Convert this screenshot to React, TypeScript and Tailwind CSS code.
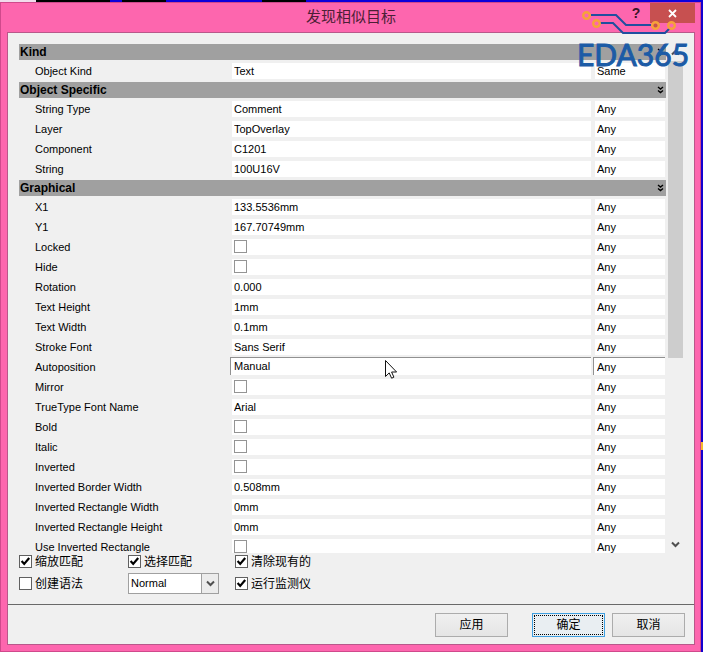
import { useState } from "react";
import clsx from "clsx";

type Field = { name: string; value: string | boolean; match?: string; active?: boolean };
type Group = { title: string; fields: Field[] };

const GROUPS: Group[] = [
  { title: "Kind", fields: [{ name: "Object Kind", value: "Text", match: "Same" }] },
  {
    title: "Object Specific",
    fields: [
      { name: "String Type", value: "Comment" },
      { name: "Layer", value: "TopOverlay" },
      { name: "Component", value: "C1201" },
      { name: "String", value: "100U16V" },
    ],
  },
  {
    title: "Graphical",
    fields: [
      { name: "X1", value: "133.5536mm" },
      { name: "Y1", value: "167.70749mm" },
      { name: "Locked", value: false },
      { name: "Hide", value: false },
      { name: "Rotation", value: "0.000" },
      { name: "Text Height", value: "1mm" },
      { name: "Text Width", value: "0.1mm" },
      { name: "Stroke Font", value: "Sans Serif" },
      { name: "Autoposition", value: "Manual", active: true },
      { name: "Mirror", value: false },
      { name: "TrueType Font Name", value: "Arial" },
      { name: "Bold", value: false },
      { name: "Italic", value: false },
      { name: "Inverted", value: false },
      { name: "Inverted Border Width", value: "0.508mm" },
      { name: "Inverted Rectangle Width", value: "0mm" },
      { name: "Inverted Rectangle Height", value: "0mm" },
      { name: "Use Inverted Rectangle", value: false },
    ],
  },
];

function Chevrons() {
  return (
    <svg width="7" height="8" viewBox="0 0 7 8" fill="none" stroke="#000" strokeWidth="1.4" aria-hidden="true">
      <path d="M1 1 3.5 3 6 1M1 4.5l2.5 2 2.5-2" />
    </svg>
  );
}

function Arrow({ up = false }: { up?: boolean }) {
  return (
    <svg width="9" height="7" viewBox="0 0 9 7" fill="none" stroke="#505050" strokeWidth="2" aria-hidden="true">
      <path d={up ? "M1 5.5 4.5 2 8 5.5" : "M1 1.5 4.5 5 8 1.5"} />
    </svg>
  );
}

function FieldRow({ name, value, match = "Any", active }: Field) {
  const id = name.replace(/ /g, "-");
  const cell = clsx("flex items-center bg-white", active ? "-mt-0.5 -ml-0.5 border-t border-l border-[#919191] pl-[3px]" : "pl-0.5");
  return (
    <div className="grid h-5 grid-cols-[213px_1fr_70px] py-0.5 pr-px">
      <label htmlFor={id} className="pl-4 leading-4">{name}</label>
      <div className={clsx(cell, "mr-1")}>
        {typeof value === "boolean" ? (
          <input id={id} type="checkbox" defaultChecked={value} className="mb-px size-[13px] appearance-none border border-[#949494] bg-white" />
        ) : (
          <input id={id} type="text" defaultValue={value} className="h-4 w-full bg-transparent outline-none" />
        )}
      </div>
      <div className={cell}>
        <select aria-label={`${name} match`} defaultValue={match} className="h-4 w-full appearance-none bg-transparent leading-4 outline-none">
          <option>Any</option>
          <option>Same</option>
          <option>Different</option>
        </select>
      </div>
    </div>
  );
}

function Option({ label, on }: { label: string; on: boolean }) {
  const [checked, setChecked] = useState(on);
  return (
    <label className="flex items-center gap-[3px] text-[12px] leading-4">
      <span className="relative flex size-[13px]">
        <input type="checkbox" checked={checked} onChange={(e) => setChecked(e.target.checked)} className="size-[13px] appearance-none border border-[#606060] bg-white" />
        {checked && (
          <svg className="pointer-events-none absolute inset-0" width="13" height="13" viewBox="0 0 13 13" fill="none" stroke="#000" strokeWidth="2.2" aria-hidden="true">
            <path d="M2.6 6 5.2 8.9 10.2 3" />
          </svg>
        )}
      </span>
      {label}
    </label>
  );
}

function Logo() {
  return (
    <div className="pointer-events-none absolute top-[10px] right-[13px] w-[113px] text-[#1c5ba6]">
      <svg className="ml-[5px]" width="100" height="28" viewBox="0 0 100 28" fill="none" aria-hidden="true">
        <g stroke="#1f4f9f" strokeWidth="2">
          <path d="M9 5h25l10 10h25M18 13h13l10 10h42l5-5" />
        </g>
        <g stroke="#f6a23a" strokeWidth="2.4">
          <circle cx="4.5" cy="5.5" r="3.3" fill="#fd66ae" />
          <circle cx="14.5" cy="13.5" r="3.3" fill="#fd66ae" />
          <circle cx="73.5" cy="15.5" r="3.3" fill="#c75050" />
          <circle cx="89.5" cy="15.5" r="3.3" fill="#fd66ae" />
        </g>
      </svg>
      <div className="font-['Lato',sans-serif] text-[30px] leading-8 [-webkit-text-stroke:1px_#1c5ba6]">EDA365</div>
    </div>
  );
}

// whatever is peeking out above the dialog
function Backdrop() {
  return (
    <div className="flex h-0.5 bg-[#0c00dc]">
      <div className="w-9 bg-[#f2dcec]" />
      <div className="mr-3 w-[74px] bg-black" />
      <div className="mr-24 w-11 bg-black" />
      <div className="w-11 bg-black" />
    </div>
  );
}

const BUTTON = "h-6 w-[73px] border border-[#acacac] bg-linear-to-b from-[#f0f0f0] to-[#e5e5e5] text-[12px]";

export default function App() {
  return (
    <div className="relative flex h-screen flex-col overflow-hidden bg-[#1400d0] font-['Liberation_Sans','Noto_Sans_CJK_SC',sans-serif] text-[11px] text-black">
      <Backdrop />
      <div className="mr-0.5 flex min-h-0 flex-1 flex-col border border-[#d0498c] bg-[#fd66ae] pr-[5px] pb-[6px] pl-[6px]">
        <header className="relative flex h-[29px] shrink-0 items-center justify-center">
          <h1 className="text-[15px] text-[#4c1f36]">发现相似目标</h1>
          <div className="absolute top-0 right-0 flex h-5">
            <button aria-label="Help" className="w-7 text-[14px] font-bold text-[#3a1428]">?</button>
            <button aria-label="Close" className="flex w-[45px] items-center justify-center bg-[#c75050]">
              <svg width="9" height="9" viewBox="0 0 9 9" stroke="#fff" strokeWidth="1.8" aria-hidden="true">
                <path d="M1 1l7 7M8 1 1 8" />
              </svg>
            </button>
          </div>
        </header>

        <main className="flex min-h-0 flex-1 flex-col border border-[#b8588a] bg-[#f0f0f0]">
          <div className="mx-[11px] mt-[11px] flex min-h-0 flex-1 gap-0.5 overflow-hidden">
            <div className="min-w-0 flex-1">
              {GROUPS.map((g) => (
                <section key={g.title} className="mb-px">
                  <h2 className="mb-px flex h-4 items-center justify-between bg-[#a0a0a0] pr-0.5 pl-px text-[12px] font-bold">
                    {g.title}
                    <Chevrons />
                  </h2>
                  {g.fields.map((f) => <FieldRow key={f.name} {...f} />)}
                </section>
              ))}
            </div>
            <div className="flex w-[15px] flex-col items-center">
              <div className="flex h-[17px] shrink-0 items-center"><Arrow up /></div>
              <div className="h-[297px] w-full shrink-0 bg-[#cdcdcd]" />
              <div className="mt-auto flex h-[17px] shrink-0 items-center"><Arrow /></div>
            </div>
          </div>

          <div className="mx-[11px] grid grid-cols-[109px_107px_1fr] grid-rows-[17px_21px] items-center gap-y-[3px] pb-[10px]">
            <Option label="缩放匹配" on />
            <Option label="选择匹配" on />
            <Option label="清除现有的" on />
            <Option label="创建语法" on={false} />
            <div className="relative h-[21px] w-[91px]">
              <select aria-label="Mode" defaultValue="Normal" className="block h-full w-full appearance-none border border-[#a0a0a0] bg-white pl-0.5 text-[11px]">
                <option>Normal</option>
                <option>Mask</option>
                <option>Dim</option>
              </select>
              <span className="pointer-events-none absolute inset-y-0 right-0 flex w-[18px] items-center justify-center border border-[#a0a0a0] bg-[#ececec]">
                <Arrow />
              </span>
            </div>
            <Option label="运行监测仪" on />
          </div>

          <footer className="flex justify-end border-t border-[#696969] pt-2 pr-[9px] pb-[7px]">
            <button className={clsx(BUTTON, "mr-6")}>应用</button>
            <button className="mr-[7px] h-6 w-[73px] border border-[#3f9fe0] bg-[#e9eef2] p-px text-[12px]">
              <span className="flex h-full items-center justify-center border border-dotted border-black">确定</span>
            </button>
            <button className={BUTTON}>取消</button>
          </footer>
        </main>
      </div>

      <Logo />
      <div className="absolute top-[442px] right-0 h-2 w-0.5 bg-[#f5b82e]" />
      <svg className="pointer-events-none absolute top-[360px] left-[385px]" width="12" height="19" viewBox="0 0 12 19" fill="#fff" stroke="#111" aria-hidden="true">
        <path d="M.5.5v16l3.7-3.6 2.4 5.3 2.3-1-2.3-5.2h5z" />
      </svg>
    </div>
  );
}
